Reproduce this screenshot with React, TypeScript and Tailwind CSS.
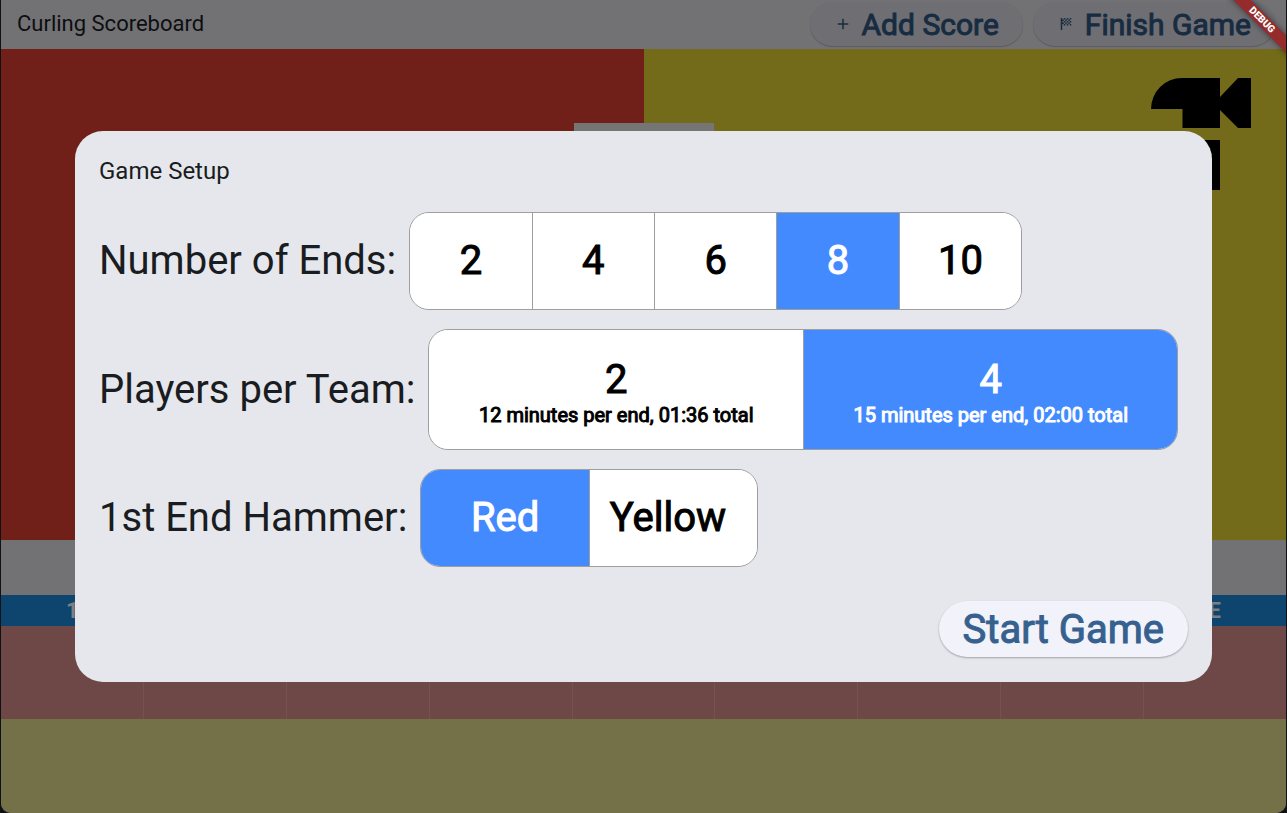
import { useState } from "react";
import type { ReactNode } from "react";
import { MdAdd, MdSportsScore } from "react-icons/md";

const columns = ["1", "2", "3", "4", "5", "6", "7", "8", "E"];

function Choice({ name, value, selected, onSelect, align = "items-center", children }: {
  name: string; value: string; selected: boolean; onSelect: (v: string) => void; align?: string; children: ReactNode;
}) {
  return (
    <label
      className={`relative flex flex-1 cursor-pointer flex-col justify-center border-l border-[#9e9e9e] px-5 first:border-l-0 ${align} ${
        selected ? "bg-[#448aff] text-white" : "bg-white text-black"
      }`}
    >
      <input type="radio" name={name} value={value} checked={selected} onChange={() => onSelect(value)} className="sr-only" />
      {children}
    </label>
  );
}

function Row({ label, size, children }: { label: string; size: string; children: ReactNode }) {
  return (
    <fieldset className="flex items-center gap-[13px]" aria-label={label}>
      <span className="whitespace-nowrap text-[40px] leading-[58px] text-[#191c20]">{label}</span>
      <div className={`flex overflow-hidden rounded-[20px] border border-[#9e9e9e] ${size}`}>{children}</div>
    </fieldset>
  );
}

function BarButton({ icon, children }: { icon: ReactNode; children: ReactNode }) {
  return (
    <button className="flex h-11 items-center gap-2.5 rounded-full bg-[#6e6e73] px-6 text-[30px] text-[#182c41] shadow-[0_1px_1px_rgba(0,0,0,0.2)]">
      {icon}
      <span className="pt-0.5 [-webkit-text-stroke:1px]">{children}</span>
    </button>
  );
}

export default function App() {
  const [ends, setEnds] = useState("8");
  const [players, setPlayers] = useState("4");
  const [hammer, setHammer] = useState("Red");

  return (
    <div className="relative min-h-screen bg-[#101114] px-px font-['Roboto',sans-serif]">
      <div className="relative flex min-h-screen flex-col overflow-hidden rounded-b-[10px] bg-[#727274]">
        <header className="flex h-[49px] items-center justify-between bg-[#727274] pb-0.5 pl-4">
          <h1 className="text-[22px] leading-7 text-[#0d0e10]">Curling Scoreboard</h1>
          <div className="flex gap-2.5 pr-[11px]">
            <BarButton icon={<MdAdd className="size-[18px]" aria-hidden="true" />}>Add Score</BarButton>
            <BarButton icon={<MdSportsScore className="size-[18px]" aria-hidden="true" />}>Finish Game</BarButton>
          </div>
        </header>
        <div className="flex h-[491px]">
          <div className="flex-1 bg-[#701f19]" />
          <div className="flex-1 bg-[#736b1a]">
            <svg viewBox="0 0 100 112" className="mt-[29px] mr-[35px] ml-auto h-28 w-[100px]" fill="black" aria-hidden="true">
              <path d="M0 31A31 31 0 0 1 31 0H69V19L87 0H100V50H87L69 32V50H31.500V31zM31 62H69V112H31z" />
            </svg>
          </div>
        </div>
        <div className="h-[55px] bg-[#727274]" />
        <table className="w-full flex-1 table-fixed border-collapse">
          <thead>
            <tr className="h-[31px] bg-[#0e456e] text-[22px] leading-[31px] text-[#7d7f82]">
              {columns.map((c) => <th key={c} className="p-0 font-bold">{c}</th>)}
            </tr>
          </thead>
          <tbody>
            <tr className="h-[93px] bg-[#6e4846]">
              {columns.map((c) => <td key={c} className="border-r border-[#745250] p-0 last:border-r-0" />)}
            </tr>
            <tr className="bg-[#747047]">
              {columns.map((c) => <td key={c} className="border-r border-[#70704e] p-0 last:border-r-0" />)}
            </tr>
          </tbody>
        </table>
      </div>

      <div className="absolute inset-0 flex items-center justify-center px-[75px]">
        <div className="absolute inset-x-0 top-[123px] mx-auto h-3 w-[140px] bg-[#757575]" />
        <form
          role="dialog"
          aria-label="Game Setup"
          className="relative flex w-full flex-col rounded-[28px] bg-[#e6e7ec] px-6 pt-6 pb-[25px]"
          onSubmit={(e) => e.preventDefault()}
        >
          <h2 className="text-2xl leading-8 text-[#191c20]">Game Setup</h2>
          <div className="mt-[25px] flex flex-col gap-[19px]">
            <Row label="Number of Ends:" size="h-[98px] w-[613px]">
              {["2", "4", "6", "8", "10"].map((v) => (
                <Choice key={v} name="ends" value={v} selected={ends === v} onSelect={setEnds}>
                  <span className="text-[40px] leading-[58px] [-webkit-text-stroke:1px]">{v}</span>
                </Choice>
              ))}
            </Row>
            <Row label="Players per Team:" size="h-[121px] w-[750px]">
              {[["2", "12 minutes per end, 01:36 total"], ["4", "15 minutes per end, 02:00 total"]].map(([v, d]) => (
                <Choice key={v} name="players" value={v} selected={players === v} onSelect={setPlayers}>
                  <span className="mt-1 text-[40px] leading-[46px] [-webkit-text-stroke:1px]">{v}</span>
                  <span className="text-[20px] leading-6 whitespace-nowrap [-webkit-text-stroke:1px]">{d}</span>
                </Choice>
              ))}
            </Row>
            <Row label="1st End Hammer:" size="h-[98px] w-[338px]">
              {["Red", "Yellow"].map((v) => (
                <Choice
                  key={v}
                  name="hammer"
                  value={v}
                  selected={hammer === v}
                  onSelect={setHammer}
                  align={v === "Yellow" ? "items-start" : "items-center"}
                >
                  <span className="text-[40px] leading-[58px] [-webkit-text-stroke:1px]">{v}</span>
                </Choice>
              ))}
            </Row>
          </div>
          <button className="mt-[34px] h-14 self-end rounded-full bg-[#f1f2fa] px-6 text-[40px] leading-[58px] text-[#36618e] shadow-[0_1px_2px_rgba(0,0,0,0.3)] [-webkit-text-stroke:1px]">
            Start Game
          </button>
        </form>
      </div>

      <div className="pointer-events-none absolute top-0 right-px size-[60px] overflow-hidden">
        <div className="absolute top-[14px] -right-[26px] w-[100px] rotate-45 bg-[#952b2b] text-center text-[10px] leading-[12px] font-black text-white shadow-[0_0_6px_rgba(0,0,0,0.5)]">
          DEBUG
        </div>
      </div>
    </div>
  );
}
